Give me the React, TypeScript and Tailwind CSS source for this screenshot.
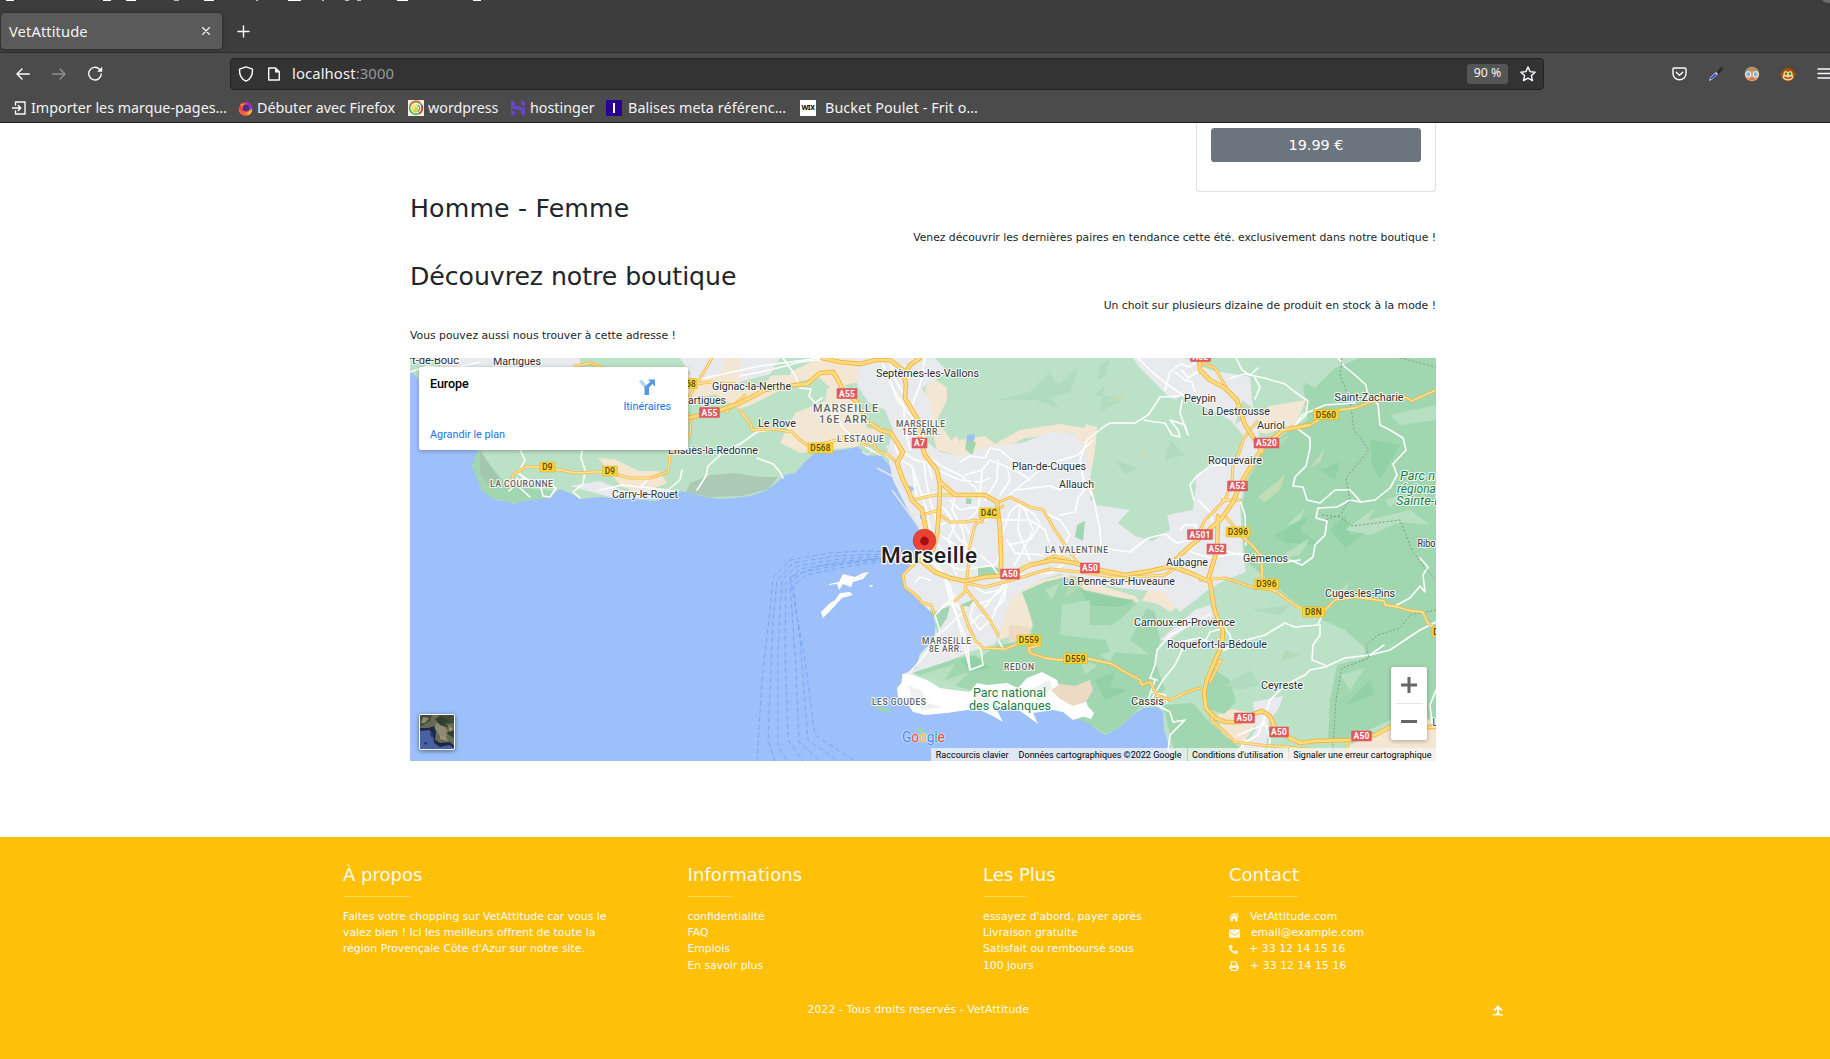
import type { ReactNode } from "react";
import { FaEnvelope, FaPhone } from "react-icons/fa";

type Pt = string;

const WHITE_ROADS: Pt[] = [
  "410,372 428,366 450,369 480,362",
  "520,450 525,460 518,473 528,480 545,482 556,488",
  "523,478 509,491", "517,478 519,487 530,497", "528,482 540,484 543,496 550,497 556,488",
  "582,450 581,458 585,470 583,484 573,492 580,498", "600,490 622,485 640,487 650,478",
  "640,487 668,490 680,480 682,470", "726,450 708,466 706,476 697,490", "726,450 740,444",
  "680,380 705,378 760,366 820,358", "740,376 770,370 800,362 836,358",
  "783,358 795,375 800,388 811,389 809,396 815,403 822,398", "740,444 757,432 770,430",
  "757,458 773,464 780,472 783,478",
  "832,408 843,428 857,440 866,447 880,455", "880,358 890,380 897,400 904,408 905,430 910,450",
  "925,358 920,385 912,405", "890,358 893,375 907,400", "884,366 892,387 907,411 917,424",
  "895,445 900,460 912,466 915,485 917,500", "903,452 915,460 928,463 932,478",
  "925,455 945,468 960,475 975,487 980,496", "937,470 960,480 980,482 990,478",
  "912,466 920,490 927,511 930,530", "924,462 926,480 930,500 935,515 938,530",
  "915,500 922,495 935,493", "960,462 970,456 985,458 990,448 1000,450 1012,460 1020,472",
  "965,475 982,470 990,460 1005,466 1020,473 1030,480", "982,470 980,495 978,510 968,520",
  "998,460 997,480 985,500", "1007,466 1010,480 1000,495", "983,523 997,507 1015,490 1040,470 1055,462 1078,455 1093,440",
  "1015,490 1050,486 1060,490 1075,482 1092,488", "1060,515 1075,512 1078,498 1088,485 1094,500 1100,530 1101,547",
  "1000,540 1010,512 1020,503 1018,530 1030,560", "1020,505 1035,515 1040,525 1030,540 1008,545",
  "1002,520 1030,520 1045,530 1050,545 1060,556", "1015,498 1025,510 1033,530 1023,550 1014,566",
  "1043,512 1060,520 1070,535 1064,545", "1007,540 1015,553 1043,555", "1101,548 1130,552 1148,538 1165,534 1177,543 1200,538",
  "940,505 950,515 953,530 960,540 975,550", "950,500 960,510 975,507 983,515", "945,510 955,525 948,540 956,558",
  "940,525 952,520 965,525 969,533", "940,535 960,548 969,555", "955,495 952,510 963,530 966,550",
  "938,545 950,560 957,575", "928,550 935,565 950,585 954,600 960,610", "933,555 945,578 953,600 963,640 970,670 983,665 981,650 975,640",
  "937,558 960,570 975,568 995,565 1000,555", "943,573 950,600 967,640 970,670", "915,582 920,577 930,580",
  "910,672 925,655 940,632 935,615 955,595", "942,632 955,620 965,610", "938,612 944,605 957,601",
  "975,605 990,600 1007,585 990,623", "970,625 980,615 990,617 997,632", "985,607 1007,580 1004,600 994,610",
  "965,590 975,600 970,617 980,630 990,620", "1000,590 985,593 975,587", "1000,577 990,563 980,555",
  "998,640 1004,650 1008,648", "1003,568 1020,575 1050,573 1065,563 1078,555",
  "1085,490 1080,460 1087,440 1102,428 1110,423 1135,423 1148,415 1155,405 1160,397 1180,396",
  "1144,420 1155,422 1165,423 1172,435 1180,437 1178,430 1170,420 1185,425 1188,435 1180,413 1182,400",
  "1138,358 1150,370 1162,380 1178,392 1185,396", "1165,390 1170,372 1180,364 1190,367 1200,358",
  "1175,372 1185,380 1192,382 1196,395", "1200,370 1188,378 1182,370",
  "1230,378 1245,374 1264,378 1285,384 1295,392 1308,401 1306,415 1294,426 1310,438 1310,448 1306,466 1295,477 1293,486 1303,487 1307,500 1320,503 1335,490 1350,490 1361,502 1375,500 1390,488 1397,475 1393,464 1406,450 1403,438 1390,430 1380,425 1378,404 1368,398 1366,385 1355,375 1345,367 1338,358",
  "1236,358 1242,370 1250,375 1258,368", "1255,378 1260,387 1255,399", "1295,426 1302,415 1325,405 1355,403",
  "1361,502 1350,500 1337,507 1318,508 1316,518 1327,521 1325,535 1315,545 1313,557 1302,565 1290,560",
  "1194,500 1190,485 1195,478 1210,466 1225,465", "1198,500 1210,512 1212,522", "1240,500 1245,515 1246,545",
  "1180,530 1185,525 1196,525 1195,545 1190,550", "1222,550 1240,555 1260,563", "1185,550 1210,558 1240,553 1250,556",
  "1157,680 1150,678 1155,665 1157,650 1170,635 1190,625 1210,614", "1152,698 1163,680 1175,665 1182,650 1179,642 1200,638 1225,650 1245,640",
  "1205,642 1210,632 1225,628 1230,635 1232,645", "1223,650 1240,642 1265,635 1285,623 1295,627 1318,625 1322,615",
  "1320,625 1320,635 1313,645 1312,660 1325,665", "1436,622 1420,630 1390,650 1370,655 1345,658 1325,667 1310,670 1305,675 1285,685 1270,700 1265,715",
  "1384,645 1370,655", "1395,606 1410,598 1420,586 1425,592 1423,575 1428,567 1420,558",
  "1265,715 1258,735 1245,742 1235,755", "1265,717 1263,725 1238,735", "1265,722 1270,740 1268,760", "1245,740 1240,760",
  "1157,705 1170,712 1173,722 1185,720 1170,735 1168,750 1178,758", "1167,703 1165,695 1152,692",
  "1155,680 1148,700 1158,703", "1436,690 1430,705 1432,722", "1300,560 1280,563 1270,560",
];

const MAJOR_ROADS: Pt[] = [
  "688,418 715,412 740,403 765,390 795,385 807,384 820,373 833,372 838,380 843,390 857,402 866,420 880,430 891,433 903,452 897,463 903,480 909,492 912,500 922,510 925,525 930,545",
  "822,358 840,362 860,364 875,360 890,360 903,370 906,385 905,398 912,410 918,420 920,440 925,455 937,470 940,485 939,510 937,535 933,550",
  "920,358 910,365 905,375",
  "940,482 955,495 985,495 997,502 1000,530 1001,555 1001,575",
  "920,560 935,572 950,578 965,581 985,577 1010,575 1030,565 1053,560 1075,563 1090,568 1125,575 1150,571 1172,566 1195,575 1210,582 1212,595 1215,612 1223,630 1222,645 1213,665 1207,680 1204,692 1206,708 1215,718 1225,722 1240,722 1254,714 1262,711 1270,716 1275,728 1290,738 1300,743 1315,741 1350,740 1375,735 1390,727 1436,727",
  "1172,566 1180,555 1200,538 1222,518 1233,502 1240,485 1250,468 1258,455 1265,445 1283,430 1310,425",
  "1208,580 1217,550 1218,516",
  "1262,452 1255,440 1245,425 1240,410 1237,400 1225,388 1210,380 1200,370 1200,358",
];

const MINOR_ROADS: Pt[] = [
  "510,487 513,475 525,467 540,467 555,469 575,473 595,472 603,472 618,475 630,478 650,478 668,472 670,455 690,435 691,420 685,410 690,395 705,370 712,358",
  "740,410 751,425 752,430 775,429 792,432 800,440 810,447 836,440 855,440 866,445 873,443 878,452 888,454 897,463",
  "575,366 590,363 601,367", "690,385 710,382 735,384", "726,412 745,395",
  "1310,425 1325,416 1338,410 1355,408 1370,402 1405,397 1412,401 1425,395 1436,390",
  "1257,422 1250,430 1243,440 1240,450 1233,465 1232,480 1225,500 1205,520 1200,530",
  "1203,363 1215,368 1226,387", "1222,500 1240,500", "912,500 935,495 955,495", "922,515 940,510",
  "940,515 950,522 965,522 975,520 983,522", "998,503 1010,497 1030,507 1043,510 1055,530 1065,545 1080,566",
  "1003,506 983,518 975,525 970,545 968,570 965,592 955,601", "1045,560 1055,556 1070,560",
  "966,583 985,587 1005,582 1050,569 1080,572 1120,578 1165,575 1175,568 1175,558",
  "1200,580 1225,578 1255,588 1275,590 1290,602 1302,609 1325,610 1335,600 1355,597 1384,601 1385,605 1398,607 1412,611 1423,612 1427,622 1436,630",
  "1224,515 1233,525 1240,535 1252,545 1262,557 1262,570 1262,582 1275,592",
  "962,607 968,625 975,640 983,648 1005,649 1020,643 1040,645 1029,648 1030,653 1045,658 1060,660 1090,659 1112,664 1125,672 1140,680 1142,685 1150,682 1157,695 1170,700 1185,693 1200,688",
  "965,588 980,607 990,620 998,635", "922,560 912,566 903,575 905,587 918,597 922,603 931,605 934,613",
  "1214,664 1221,660 1210,682", "1204,700 1213,722 1225,732 1235,742 1260,745 1285,747 1315,750", "1347,742 1347,755",
];

const LIGHT = "#bbe2c6";
const DARK = "#a0d7b0";
const SAND = "#f3e6d2";
const URBAN = "#e8eaed";

const SHARDS: { f: string; p: Pt }[] = [
  { f: "#afdabb", p: "997,400 1030,392 1050,372 1058,385 1078,368 1070,392 1050,398 1060,408 1035,400" },
  { f: "#afdabb", p: "1100,365 1110,360 1104,378 1097,380" }, { f: "#afdabb", p: "1094,395 1105,385 1100,412 1120,402 1130,390 1115,397" },
  { f: "#afdabb", p: "1115,460 1138,468 1125,475" }, { f: "#afdabb", p: "1170,440 1185,455 1165,460" },
  { f: "#c9ddb9", p: "1105,403 1130,390 1122,399" }, { f: "#c9ddb9", p: "1140,450 1150,454 1142,457" },
  { f: "#c9ddb9", p: "1258,497 1285,475 1280,490 1265,502" }, { f: "#c9ddb9", p: "1310,468 1325,448 1320,462" },
  { f: "#b5ddb5", p: "1268,443 1290,435 1275,450" }, { f: "#b5ddb5", p: "1255,410 1235,425 1242,400" },
  { f: "#8fcfa2", p: "1275,535 1310,515 1300,530 1320,545 1285,543" }, { f: "#8fcfa2", p: "1330,530 1345,515 1350,535 1370,530 1345,548" },
  { f: "#8fcfa2", p: "1370,440 1400,445 1380,480 1372,465" }, { f: "#8fcfa2", p: "1320,470 1340,462 1335,480" },
  { f: LIGHT, p: "1345,530 1375,508 1368,520 1410,510 1430,525 1400,522 1370,535" },
  { f: LIGHT, p: "1275,560 1310,538 1300,555" }, { f: LIGHT, p: "1285,527 1305,508 1300,520" },
  { f: LIGHT, p: "1315,375 1328,370 1318,385" }, { f: LIGHT, p: "1385,500 1400,495 1390,508" },
  { f: LIGHT, p: "1390,415 1436,405 1436,420 1400,425" }, { f: "#c3e1b8", p: "1340,590 1350,582 1343,598" },
  { f: "#8fcfa2", p: "1080,590 1110,597 1135,600 1120,607 1090,605" }, { f: LIGHT, p: "1045,590 1060,583 1052,600" },
  { f: LIGHT, p: "1062,605 1090,600 1090,625 1110,625 1105,640 1060,635" }, { f: LIGHT, p: "1103,632 1125,615 1140,600 1150,602 1130,640 1150,655 1110,652" },
  { f: "#b7dcb4", p: "1070,575 1090,580 1065,598" }, { f: LIGHT, p: "1080,660 1098,665 1085,675" }, { f: LIGHT, p: "1100,655 1115,650 1110,662" },
  { f: "#8fcfa2", p: "1095,680 1115,672 1110,687 1130,690 1105,700" }, { f: LIGHT, p: "1340,675 1365,668 1350,690" },
  { f: "#8fcfa2", p: "1345,705 1370,680 1375,695" }, { f: LIGHT, p: "920,675 955,664 945,680 970,672 950,690" },
  { f: "#8fcfa2", p: "960,658 975,655 990,668 970,672" }, { f: "#b1d9b5", p: "1285,650 1300,655 1280,662" },
  { f: "#afdabb", p: "1250,610 1290,605 1280,615" }, { f: "#afdabb", p: "1225,685 1250,670 1260,685 1240,690" },
];

type Label = { x: number; w: number; y: number; t: string; s?: number; c?: string; i?: boolean; k?: boolean };
const LABELS: Label[] = [
  { x: 408, w: 51, y: 363.5, t: "rt-de-Bouc" }, { x: 493, w: 48, y: 364.5, t: "Martigues" },
  { x: 612, w: 66, y: 498, t: "Carry-le-Rouet" }, { x: 668, w: 90, y: 454, t: "Ensuès-la-Redonne" },
  { x: 712, w: 79, y: 390, t: "Gignac-la-Nerthe" }, { x: 688, w: 38, y: 404, t: "artigues" },
  { x: 490, w: 63, y: 486.5, t: "LA COURONNE", k: true, s: 8.7 }, { x: 876, w: 103, y: 376.5, t: "Septèmes-les-Vallons" },
  { x: 813, w: 65, y: 412, t: "MARSEILLE", k: true, s: 10.8 }, { x: 819, w: 52, y: 423, t: "16E ARR.", k: true, s: 10.8 },
  { x: 896, w: 49, y: 426.5, t: "MARSEILLE", k: true, s: 8.5 }, { x: 902, w: 38, y: 434.5, t: "15E ARR.", k: true, s: 8.5 },
  { x: 837, w: 47, y: 442, t: "L'ESTAQUE", k: true, s: 8.7 }, { x: 758, w: 38, y: 427, t: "Le Rove" },
  { x: 1012, w: 74, y: 470, t: "Plan-de-Cuques" }, { x: 1059, w: 35, y: 488, t: "Allauch" },
  { x: 1045, w: 63, y: 553, t: "LA VALENTINE", k: true, s: 8.5 }, { x: 1184, w: 32, y: 402, t: "Peypin" },
  { x: 1202, w: 68, y: 415, t: "La Destrousse" }, { x: 1257, w: 28, y: 429, t: "Auriol" },
  { x: 1334.5, w: 69, y: 400.5, t: "Saint-Zacharie" }, { x: 1208, w: 54, y: 464, t: "Roquevaire" },
  { x: 1417.5, w: 18, y: 547, t: "Ribo" }, { x: 1243, w: 45, y: 561.5, t: "Gémenos" }, { x: 1166, w: 42, y: 566, t: "Aubagne" },
  { x: 1063, w: 112, y: 585, t: "La Penne-sur-Huveaune" }, { x: 1134, w: 101, y: 626, t: "Carnoux-en-Provence" },
  { x: 1167, w: 100, y: 648, t: "Roquefort-la-Bédoule" }, { x: 1325, w: 70, y: 597, t: "Cuges-les-Pins" },
  { x: 1261, w: 42, y: 689, t: "Ceyreste" }, { x: 1131, w: 33, y: 705, t: "Cassis" }, { x: 1432.5, w: 5, y: 726, t: "L" },
  { x: 922, w: 49, y: 643.5, t: "MARSEILLE", k: true, s: 8.5 }, { x: 929, w: 33, y: 651.5, t: "8E ARR.", k: true, s: 8.5 },
  { x: 1004, w: 30, y: 669.5, t: "REDON", k: true, s: 8.5 }, { x: 872, w: 54, y: 704.5, t: "LES GOUDES", k: true, s: 8.5 },
  { x: 973, w: 73, y: 697, t: "Parc national", s: 12.8, c: "#188244" }, { x: 969, w: 82, y: 709.5, t: "des Calanques", s: 12.8, c: "#188244" },
  { x: 1400, w: 35, y: 480, t: "Parc n", s: 12.8, c: "#188244", i: true },
  { x: 1397, w: 39, y: 492.500, t: "régiona", s: 12.8, c: "#188244", i: true },
  { x: 1396, w: 46, y: 505, t: "Sainte-B", s: 12.8, c: "#188244", i: true },
];

const SHIELDS: [string, number, number, number][] = [
  ["A55", 847, 393.5, 20], ["A55", 709.5, 412.5, 20], ["D568", 820.5, 448, 25], ["A7", 919.5, 443, 15], ["D9", 547.5, 467, 15],
  ["D9", 610, 471, 15], ["68", 691, 383.5, 12], ["D4C", 989, 513, 20], ["A52", 1200.5, 356.5, 20], ["D560", 1326, 414.5, 25],
  ["A520", 1266.5, 443, 25], ["A52", 1237.5, 486, 20], ["A501", 1200, 534.5, 25], ["D396", 1238, 532, 24], ["A52", 1216.5, 549, 19],
  ["A50", 1090, 568, 19], ["A50", 1010, 574, 19], ["D396", 1266.5, 584, 24], ["D8N", 1313.5, 612, 22], ["D559", 1029, 640, 24],
  ["D559", 1075.5, 658.5, 24], ["A50", 1244.5, 718, 20], ["A50", 1279, 732, 19], ["A50", 1361.5, 736, 20], ["D", 1436, 632, 8],
];

function Roads({ list, color, width }: { list: Pt[]; color: string; width: number }) {
  return (
    <g fill="none" stroke={color} strokeWidth={width} strokeLinejoin="round" strokeLinecap="round">
      {list.map((p, i) => <polyline key={i} points={p} />)}
    </g>
  );
}

function MapDrawing() {
  return (
    <svg className="block h-full w-full" viewBox="410 358 1026 403" fontFamily="Roboto, sans-serif">
      <rect x="410" y="358" width="1026" height="403" fill="#9dc0fa" />
      <path fill={LIGHT} d="M410 358H1436V761H1175L1170 748 1164 730 1163 712 1157 707 1143 708 1133 715 1120 727 1105 735 1093 727 1088 712 1053 706 985 705 947 708 925 712 907 700 899 690 903 674 916 670 919 655 925 648 934 640 936 625 932 613 915 597 905 587 903 575 915 558 926 548 920 528 908 510 893 480 890 466 880 455 872 456 864 452 858 447 840 450 815 453 805 462 795 473 785 475 775 484 765 491 750 496 735 498 720 499 705 497 690 493 680 491 670 496 655 501 630 499 600 497 580 499 572 494 560 489 550 497 530 500 519 501 514 504 505 500 498 501 492 495 485 493 484 486 478 475 472 467 475 462 478 450 474 440 410 370z" />
      {/* sand belts round the hills */}
      <g fill={SAND}>
        <path d="M715 358h35l15 18 40-2-25 20-40 15-25-15-20 5-20-15z" />
        <path d="M790 372l30-14h45l8 5-12 18-6 18 30 20-5 18-25 10-55 6-20-10 15-30 30-12 2-10-16-12-20 4z" />
        <path d="M598 458l16 1 25 12 20 0 8 12-25 10-20-6-12-14z" />
        <path d="M925 388l8-10 14 10 0 12-10 20 14 20 6-4 10 22-30-8-8-30z" />
        <path d="M960 440l25-4 10 8 25-14 40-6 25 4 10 10v60l-15-10-5-55-50 5-25 12-25 20-15-10z" />
        <path d="M1085 424l12 3-5 70-8-10z" />
        <path d="M1250 420l20-14 36-6-10 24-30 10-16-4z" />
        <path d="M998 640l10-42 18-14 40-10 20 4-22 18-30-10 0 14 8 14-14 18z" />
        <path d="M1075 578l60 18 5 6-30-2-38-14zM1148 590l35 2 2 10-15 10-12-8-16-3z" />
        <path d="M1217 715l15-6 20 4 6 8-16 24-18-8z" />
        <path d="M1350 745l50-22 36-4v42h-90zM1260 752h90v9h-90z" />
      </g>
      <g fill={LIGHT}>
        <path d="M740 365l35 5-10 14-25 8zM785 388l35-10 10 10-35 12-25 20-40 5 25-22zM845 385l25-5 8 25 10 10-5 12-15 2z" />
      </g>
      {/* built-up ground */}
      <g fill={URBAN}>
        <path d="M858 358H935L948 372 930 383 922 388 930 402 933 420 925 440 940 452 960 456 985 447 1000 446 1025 442 1050 432 1075 434 1085 450 1092 475 1090 500 1130 510 1118 523 1135 536 1152 541 1170 530 1167 515 1193 510 1196 485 1195 475 1220 462 1240 455 1243 435 1230 420 1200 405 1170 398 1140 368 1133 358H1185L1210 370 1250 377 1252 400 1260 440 1262 452 1246 480 1240 505 1243 555 1246 572 1225 580 1208 590 1180 612 1163 592 1120 588 1090 582 1060 574 1040 580 1022 590 1010 600 1002 625 995 644 975 650 958 657 918 675 903 674 916 668 920 655 934 640 936 625 932 613 915 597 905 587 903 575 915 558 926 548 920 528 908 510 893 480 887 452 893 430 885 410 868 402 857 385z" />
        <path d="M680 358h45l-5 18-25 5zM570 486l30-5 25 10 30-3 25 3-20 8-50-2zM440 358h140v10H440zM740 358h40l-10 16-30 8z" />
        <path d="M1160 640l35-30 15-5 5 12-28 10-17 13zM1253 702l30-6-4 12-10 14-5 38h-30l22-30z" />
      </g>
      {/* hills north of the city, rising out of the built-up ground */}
      <path fill={LIGHT} d="M1098 432L1115 424H1150L1180 396 1200 405 1232 422 1240 445 1215 460 1196 475 1190 508 1167 515 1169 530 1152 541 1118 523 1130 510 1096 505 1090 480z" />
      {/* denser woodland */}
      <g fill={DARK}>
        <path d="M1318 358L1303 388 1306 402 1308 420 1290 430 1262 452 1247 482 1242 505 1245 560 1262 575 1292 600 1318 618 1345 630 1365 648 1364 658 1337 665 1330 700 1328 740 1352 738 1390 720 1436 718V358z" />
        <path d="M912 673L958 658 972 663 998 645 1030 640 1033 625 1027 605 1022 592 1045 582 1066 577 1085 590 1130 600 1155 612 1160 640 1155 660 1165 690 1140 708 1120 727 1105 734 1093 726 1050 705 970 690z" />
        <path d="M478 451l30 35 45 5-3 7-20 2-16 3-20-4-12-8-10-26z" />
        <path d="M1212 668l18 12 6 22-12 12-15-5-4-20zM1163 705l30-2 17 20 30 25-4 13h-60z" />
        <path d="M934 612l16-6-3 12-10 15zM978 566l22 2v8l-22 0zM960 605l14-6-5 8zM1077 525l8-4-2 20-8-4zM1048 540l3 4-2 4z" />
        <path d="M966 498l6 1-1 5-5 0zM967 435l9 8-4 12-7-6z" />
      </g>
      <path fill={LIGHT} d="M1290 360l30-2h40l-25 10-20 20-14-8z" />
      <g fill="#a5bfae" opacity=".7">
        <path d="M690 483l20-8 25-2 25 4 18 0-10 12-25 7-35 1-22-5z" />
        <path d="M480 450l8 12 12 18-10 6-10-12z" />
      </g>
      {SHARDS.map((s, i) => <polygon key={i} points={s.p} fill={s.f} opacity={0.8} />)}
      {/* bare limestone of the coves and the islands */}
      <g fill="#ffffff">
        <path d="M902 674L910 674 927 680 940 688 953 690 970 692 977 683 987 685 1007 683 1018 688 1027 678 1042 672 1057 680 1060 688 1077 703 1087 702 1088 715 1073 720 1063 712 1053 710 1033 713 1038 724 1023 713 1013 707 992 706 998 712 1003 722 993 716 982 711 967 710 947 713 925 715 913 712 907 703 898 698 897 688 902 682z" />
        <path d="M829 584l10-2 4-8 12 3 8-4 6-1-6 7-10 3-2 5-8-3-4 6-2-6-8 1zM821 612l8-8 6-4 5-7 10-1 3 3-11 3-11 12-8 8z" />
        <path d="M870 585l3 0-1 2-3-1zM1080 696l6 8 8 9-3 6-12-4z" />
      </g>
      <path fill="#eedac4" d="M1051 690L1060 684 1075 686 1090 680 1093 690 1086 702 1073 706 1060 699zM1009 625l20 2 0 8-20 8z" />
      <g fill="#eef0f2"><path d="M908 685l14 6 6 12 14 4-20 3-10-12zM975 694l10 0 6 8-12 4zM1030 690l20-10 2 8-14 14zM858 576l6-1-4 4z" /></g>
      <g fill="#9bd5ae"><path d="M876 706l12 2 3 4-12-1zM915 728l8 1 4 6-8-3zM946 747l5 3-5 1zM930 610l5 3-1 8z" /></g>
      {/* harbour moles */}
      <g fill="none" stroke="#e3e6ea" strokeWidth="1.6">
        <path d="M877 468l17 9M892 490l24 33 6 10M862 452l6 3 4-4M896 480l12 14M905 500l6-5M909 508l7-4M912 516l7-3M917 526l7-4" />
        <path d="M880 452l10 6M887 446l6 8" strokeWidth="2.5" />
      </g>
      <g fill="#9dc0fa"><path d="M967 435l7-1 1 5-4 3-4-2zM971 480l5 1-4 2z" /><path d="M908 485l6 3-2 4zM920 514l3 4-3 1z" /></g>
      <g fill="none" stroke="#78a6f5" strokeWidth="1" strokeDasharray="5 3">
        <path d="M905 552L860 551 830 553 790 560 773 577 770 610 762 680 757 761" />
        <path d="M903 553L835 556 793 563 777 580 773 620 768 740 775 761" />
        <path d="M903 555L840 559 797 566 782 580 778 650 778 745 787 761" />
        <path d="M902 557L845 561 800 569 786 582 785 650 788 740 803 761" />
        <path d="M900 558L850 563 803 572 790 583 796 670 799 742 820 761" />
        <path d="M900 560L855 565 806 575 793 586 800 640 808 740 838 761" />
        <path d="M899 556L820 566 790 577 805 660 815 735 855 761" />
      </g>
      <Roads list={WHITE_ROADS} color="#ffffff" width={1.6} />
      <g fill="none" stroke="#7f9a88" strokeWidth="1" strokeDasharray="2 2">
        <path d="M1342 358L1340 375 1350 400 1354 430 1369 450 1346 478 1350 500 1340 515 1325 520M1322 515L1340 517 1352 526 1400 520 1412 550 1425 568 1436 580M1400 358L1436 367M1436 610L1410 615 1400 628 1378 635 1366 645 1369 658 1342 668 1336 700 1332 761" />
      </g>
      <Roads list={MINOR_ROADS} color="#f5b947" width={3} />
      <Roads list={MINOR_ROADS} color="#ffe7a0" width={1.3} />
      <Roads list={MAJOR_ROADS} color="#f6b436" width={4.6} />
      <Roads list={MAJOR_ROADS} color="#ffe596" width={2.6} />
      <Roads list={MAJOR_ROADS} color="#f9cb66" width={0.7} />

      {SHIELDS.map(([t, x, y, w], i) => {
        const red = t[0] === "A";
        return (
          <g key={i}>
            <rect x={x - w / 2} y={y - 5} width={w} height={10} rx="0.5" fill={red ? "#dd5b61" : "#fad53e"} stroke={red ? "#dd5b61" : "#d9b52a"} strokeWidth="0.6" />
            <text x={x} y={y + 3} textAnchor="middle" fontSize="8.4" fontWeight={red ? 700 : 500} fill={red ? "#fff" : "#5a4300"} letterSpacing=".2">{t}</text>
          </g>
        );
      })}
      {LABELS.map((l, i) => (
        <text
          key={i} x={l.x} y={l.y} textLength={l.w} lengthAdjust={l.k ? "spacing" : "spacingAndGlyphs"} fontSize={l.s ?? 11.3}
          fill={l.c ?? (l.k ? "#5f6368" : "#2b2d30")} fontWeight={l.k ? 500 : 400} fontStyle={l.i ? "italic" : "normal"}
          stroke="#fff" strokeWidth="2.2" strokeOpacity=".85" strokeLinejoin="round" paintOrder="stroke"
        >
          {l.t}
        </text>
      ))}
      <circle cx="924.5" cy="540.5" r="11.3" fill="#ea4335" stroke="#c5221f" strokeWidth=".6" />
      <circle cx="924.5" cy="541" r="4.4" fill="#a50e0e" />
      <path d="M920 551h9l-4 9z" fill="#ea4335" />
      <text x="881" y="563" textLength="96" fontSize="22.5" fontWeight="500" fill="#202124" stroke="#fff" strokeWidth="2.6" strokeLinejoin="round" paintOrder="stroke">Marseille</text>
    </svg>
  );
}

function Satellite() {
  return (
    <svg viewBox="0 0 34 34" className="h-full w-full">
      <rect width="34" height="34" fill="#666b52" />
      <path d="M0 0h12l-2 6-10 6zM18 0h16v8l-12 2z" fill="#3f4d38" />
      <path d="M3 2l6 1-4 5-4 0zM16 8l8 2 4 8-3 6-6-4-4-7z" fill="#8f8873" />
      <path d="M15 4l6-3 8 5-5 2 6 5-10-3zM26 18l8-3v8z" fill="#2f3f2e" />
      <path d="M28 10l5 4-3 3zM20 20l6 2 2 4-8-2z" fill="#9c9378" />
      <path d="M0 14L10 12 14 17 15 26 20 28 30 27 34 31V34H0z" fill="#4a60a0" />
      <path d="M0 13h9l5-2 2 6-1 8 5 3 10-1 4 4v2l-5-3-9 2-6-4-1-9-4-4-9 1z" fill="#1b2745" />
      <path d="M5 27l2 0 0 3-3-1zM10 18l3 0 1 4-3 0z" fill="#25376a" />
    </svg>
  );
}

function Bookmark({ icon, children, className }: { icon: ReactNode; children: ReactNode; className: string }) {
  return (
    <div className={"flex shrink-0 items-center whitespace-nowrap " + className}>
      {icon}
      {children}
    </div>
  );
}

function Browser() {
  const s = { fill: "none", stroke: "#fbfbfe", strokeWidth: 1.4, strokeLinecap: "round", strokeLinejoin: "round" } as const;
  return (
    <header className="flex h-[123px] flex-col border-b border-[#1c1b22] bg-[#4b4b4b] font-['Noto_Sans',sans-serif] text-[14.3px] text-[#f3f3f5]">
      <div className="flex h-[53px] flex-col border-b border-[#2b2b2b] bg-[#3d3d3d]">
        <svg className="block h-[13px] w-full shrink-0" viewBox="0 0 1830 13">
          <path d="M6 0h8M103 0h8M126 0h10M204 0h10M288 0h13M397 0h11M473 0h8" stroke="#fff" strokeWidth="2" />
          <path d="M174 0h5M256 0h2M322 0h2M345 0h4M357 0h4" stroke="#bbb" strokeWidth="2" />
          <circle cx="1828" cy="-4" r="7" fill="#6a6a6a" />
        </svg>
        <div className="flex items-center">
          <div className="ml-px flex h-9 w-[221px] items-center justify-between rounded-[4px] bg-[#5a5a5a] pl-2 pr-3 shadow-[0_0_3px_rgba(0,0,0,.5)]">
            <span className="text-[14.7px] tracking-[0.1px]">VetAttitude</span>
            <svg width="8" height="8" viewBox="0 0 8 8"><path d="M.5.5l7 7M7.5.5l-7 7" {...s} strokeWidth={1.1} /></svg>
          </div>
          <svg className="ml-[15px]" width="13" height="13" viewBox="0 0 13 13"><path d="M6.5 1v11M1 6.500h11" {...s} /></svg>
        </div>
      </div>
      <div className="flex h-[41px] shrink-0 items-center">
        <svg className="ml-4" width="14" height="12" viewBox="0 0 14 12"><path d="M13.300 6H1M6 1L1 6l5 5" {...s} /></svg>
        <svg className="ml-[22px] opacity-40" width="14" height="12" viewBox="0 0 14 12"><path d="M.7 6H13M8 1l5 5-5 5" {...s} /></svg>
        <svg className="ml-[22px]" width="15" height="15" viewBox="0 0 15 15">
          <path d="M13.300 8A6.300 6.300 0 1 1 11.500 3.200" {...s} /><path d="M14.200 .8v5H9.200z" fill="#fbfbfe" />
        </svg>
        <div className="ml-[127px] flex h-8 w-[1315px] items-center rounded-[4px] border border-[#222] bg-[#333]">
          <svg className="ml-[7px]" width="16" height="16" viewBox="0 0 16 16"><path d="M8 .8L14.500 3.200C14.700 8.500 12.500 13.200 8 15.200 3.500 13.200 1.300 8.500 1.500 3.200z" {...s} /></svg>
          <svg className="ml-[13px]" width="14" height="14" viewBox="0 0 14 14"><path d="M1.700 1h6.800l3.800 3.800V13H1.700z" {...s} /><path d="M8 1v4.500h4.500z" fill="#fbfbfe" /></svg>
          <span className="ml-[11px] text-[14.8px] tracking-[0.13px]">localhost<span className="text-[#9a9a9c]">:3000</span></span>
          <span className="ml-auto flex h-5 w-[41px] items-center justify-center rounded-[3px] bg-[#555] text-[12.3px]">90 %</span>
          <svg className="ml-3 mr-[7px]" width="16" height="16" viewBox="0 0 16 16"><path d="M8 1l2.100 4.600 5 .6-3.700 3.400 1 5L8 12.100 3.600 14.600l1-5L.9 6.200l5-.6z" {...s} /></svg>
        </div>
        <svg className="ml-[128px]" width="15" height="14" viewBox="0 0 15 14"><path d="M2.200 1h10.600q1.200 0 1.200 1.200V6.500a6.500 6.300 0 0 1-13 0V2.200Q1 1 2.200 1zM4.300 5.200l3.200 3.100 3.200-3.100" {...s} /></svg>
        <svg className="ml-[21px]" width="16" height="16" viewBox="0 0 16 16">
          <path d="M8 7l4-5 3-1.500-1 4-4 4z" fill="#2d2a2a" /><path d="M1 15l1-3.500L8 6l2 2-6 5.500z" fill="#dfe6f5" /><path d="M2.500 13l5.500-5" stroke="#2c50d8" strokeWidth="1.800" />
        </svg>
        <svg className="ml-5" width="16" height="16" viewBox="0 0 16 16">
          <circle cx="8" cy="8" r="7.300" fill="#d99a6c" /><path d="M1 7a7.200 7.200 0 0 1 14 0l-3-2H4z" fill="#a3946a" />
          <circle cx="4.300" cy="8.300" r="2.700" fill="#86b9d0" stroke="#f4f6f6" strokeWidth="1" /><circle cx="11.700" cy="8.300" r="2.700" fill="#86b9d0" stroke="#f4f6f6" strokeWidth="1" />
          <path d="M6 13h4" stroke="#c0563b" />
        </svg>
        <svg className="ml-5" width="16" height="16" viewBox="0 0 16 16">
          <path d="M7 3l3-3 0 2 3-1-1 3z" fill="#7b3b00" /><circle cx="2.300" cy="8.500" r="2.200" fill="#9b4d05" /><circle cx="13.700" cy="8.500" r="2.200" fill="#9b4d05" />
          <circle cx="8" cy="8.800" r="6.700" fill="#a85208" /><path d="M3.500 8q0-3 2.500-3l2 1 2-1q2.500 0 2.500 3l1 3q-1 3.500-5.500 3.500T2.500 11z" fill="#f5d18c" />
          <circle cx="6" cy="7.800" r="1.200" fill="#3b7a3a" /><circle cx="10" cy="7.800" r="1.200" fill="#3b7a3a" /><path d="M4.500 11q3.500 2.500 7 0" stroke="#8d1f10" strokeWidth="1.200" fill="none" />
        </svg>
        <svg className="ml-[21px] shrink-0" width="13" height="11" viewBox="0 0 13 11"><path d="M1 1h12M1 5.500h12M1 10h12" {...s} /></svg>
      </div>
      <div className="flex h-7 items-center">
        <Bookmark className="ml-3 w-[226px] gap-[5px]" icon={
          <svg width="14" height="14" viewBox="0 0 14 14"><path d="M3.500 4V1h9.500v12H3.500v-3M0 7h8.500M6.300 4.500L8.800 7 6.300 9.500" {...s} /></svg>
        }>Importer les marque-pages…</Bookmark>
        <Bookmark className="w-[170px] gap-1 tracking-[-0.03px]" icon={
          <svg width="15" height="15" viewBox="0 0 15 15">
            <circle cx="7.500" cy="8" r="6.800" fill="#ff3a50" />
            <path d="M.7 8a6.800 6.800 0 0 0 13.600 0l-3-1-4 4z" fill="#ff7a2a" opacity=".55" />
            <path d="M2 3.500L4.500 2 7 3.500l-2 3 2 4 4 .5 2-3 1.300 1A6.800 6.800 0 0 1 9 14.500z" fill="#ffb52e" opacity=".55" />
            <path d="M7 .8q6.500 0 7.300 6.200L13 11q-.5-3-1.500-5z" fill="#9d2bd6" /><circle cx="8" cy="7" r="3.500" fill="#4c3180" /><path d="M11 10.500l3.200-2.500a7 7 0 0 1-4 6z" fill="#ffc83a" />
          </svg>
        }>Débuter avec Firefox</Bookmark>
        <Bookmark className="w-[102px] gap-1" icon={
          <svg width="16" height="16" viewBox="0 0 16 16"><rect width="16" height="16" fill="#f6eee0" /><circle cx="8" cy="8" r="6.300" fill="none" stroke="#3bae49" strokeWidth="1.500" /><path d="M2 6a6.300 6.300 0 0 1 10-3.500" stroke="#e2732e" strokeWidth="1.600" fill="none" /><path d="M13.500 5a6.300 6.300 0 0 1-2 8.500" stroke="#d9372b" strokeWidth="1.600" fill="none" /><circle cx="8" cy="8.500" r="4" fill="#d8d63a" /><path d="M5 10l2-5 4 3-1 4" stroke="#f7f7f7" fill="none" /><path d="M10 5l2 3-2 4" stroke="#3a9a8e" fill="none" /></svg>
        }>wordpress</Bookmark>
        <Bookmark className="ml-px w-[95px] gap-[5px]" icon={
          <svg width="14" height="16" viewBox="0 0 14 16"><path d="M0 0l4 2v4h5l4 3H0zM14 16l-4-2v-4H5l-4-2.500h13zM10 0l4 2v4.500l-4-2zM0 10l4 2v4l-4-2z" fill="#6747c7" /></svg>
        }>hostinger</Bookmark>
        <Bookmark className="w-[194px] gap-1.5 tracking-[0.1px]" icon={<span className="flex size-4 items-center justify-center bg-[#2a0090]"><span className="h-2.5 w-0.5 bg-white" /></span>}>Balises meta référenc…</Bookmark>
        <Bookmark className="gap-[9px] tracking-[0.1px]" icon={<span className="flex size-4 items-center justify-center bg-white text-[7px] font-bold tracking-[-0.05em] text-black">WIX</span>}>Bucket Poulet - Frit o…</Bookmark>
      </div>
    </header>
  );
}

function MapPanel() {
  return (
    <div className="relative h-[403px] overflow-hidden font-[Roboto,sans-serif]">
      <MapDrawing />
      <div className="absolute left-[9px] top-[9px] flex h-[83px] w-[269px] justify-between rounded-[2px] bg-white px-[11px] shadow-[0_1px_4px_rgba(0,0,0,.3)]">
        <div className="flex flex-col">
          <span className="mt-[9px] text-[12.6px] font-medium leading-4 tracking-[-0.01em] text-black">Europe</span>
          <span className="mt-[35px] text-[10.8px] leading-4 text-[#1a73e8]">Agrandir le plan</span>
        </div>
        <div className="mr-1.5 flex flex-col items-center">
          <svg className="mt-3" width="16" height="16" viewBox="0 0 16 16"><path d="M0 2.500L2.500 .5 8 6.500 6 9.500z" fill="#b5d3f5" /><path d="M9 .5h7v7l-2.500-2.500L10 8.500V16H5.500V8L11.300 2.800z" fill="#5596e6" /></svg>
          <span className="mt-1 text-[10.8px] leading-4 text-[#1a73e8]">Itinéraires</span>
        </div>
      </div>
      <div className="absolute left-[9px] top-[356px] size-9 overflow-hidden rounded-[2px] border border-white shadow-[0_1px_4px_rgba(0,0,0,.5)]"><Satellite /></div>
      <div className="absolute left-[492px] top-[371px] text-[13.800px] leading-4 tracking-[-0.01em] [text-shadow:0_0_1px_#fff,0_0_2px_#fff]">
        <span className="text-[#4285f4]">G</span><span className="text-[#ea4335]">o</span><span className="text-[#f4b400]">o</span><span className="text-[#4285f4]">g</span><span className="text-[#34a853]">l</span><span className="text-[#ea4335]">e</span>
      </div>
      <div className="absolute left-[981px] top-[309px] flex h-[73px] w-9 flex-col items-center rounded-[2px] bg-white shadow-[0_1px_4px_rgba(0,0,0,.3)]">
        <svg className="mt-[10px]" width="16" height="16" viewBox="0 0 16 16"><path d="M8 0v16M0 8h16" stroke="#666" strokeWidth="3" /></svg>
        <span className="mt-[10px] h-px w-[27px] bg-[#e6e6e6]" />
        <span className="mt-4 h-[3px] w-4 bg-[#666]" />
      </div>
      <div className="absolute bottom-0 right-0 flex h-[13px] items-center text-[9px] leading-[15px] text-black">
        <span className="h-[13px] bg-[#f5f5f5]/75 px-[5px]">Raccourcis clavier</span>
        <span className="h-[13px] bg-[#f5f5f5]/75 px-[5px]">Données cartographiques ©2022 Google</span>
        <span className="ml-px h-[13px] bg-[#f5f5f5]/75 px-[4.500px]">Conditions d'utilisation</span>
        <span className="ml-px h-[13px] bg-[#f5f5f5]/75 px-[4.500px]">Signaler une erreur cartographique</span>
      </div>
    </div>
  );
}

function Column({ title, className, rule, children }: { title: string; className: string; rule: string; children: ReactNode }) {
  return (
    <div className={"shrink-0 " + className}>
      <h6 className="h-[22px] text-[18px] leading-6">{title}</h6>
      <div className={"mb-3 mt-[11px] h-px bg-white/35 " + rule} />
      <div className="leading-4">{children}</div>
    </div>
  );
}

function Footer() {
  return (
    <footer className="h-[222px] bg-[#ffc107] text-[10.8px] text-[#f8f9fa]">
      <div className="flex h-[154px] pl-[343px] pt-[26px]">
        <Column title="À propos" className="w-[344.500px]" rule="w-[68px]">
          <span className="tracking-[0.01px]">Faites votre chopping sur VetAttitude car vous le<br />valez bien ! Ici les meilleurs offrent de toute la<br />région Provençale Côte d'Azur sur notre site.</span>
        </Column>
        <Column title="Informations" className="w-[295.500px] [&_h6]:tracking-[0.1px]" rule="w-11">
          confidentialité<br />FAQ<br />Emplois<br /><span className="mt-px block">En savoir plus</span>
        </Column>
        <Column title="Les Plus" className="w-[246px]" rule="w-11">
          essayez d'abord, payer après<br />Livraison gratuite<br />Satisfait ou remboursé sous<br /><span className="mt-px block">100 jours</span>
        </Column>
        <Column title="Contact" className="w-[200px]" rule="w-[69px]">
          <div className="flex items-center gap-[11px]">
            <svg width="10" height="10" viewBox="0 0 10 10" fill="currentColor"><path d="M5 .8L10 5l-.6.7L5 2.200.6 5.700 0 5zM7.600 1.200H9v2.200L7.600 2.300zM5 2.900L8.600 5.900V9.200H6V6.700H4v2.500H1.400V5.900z" /></svg>
            VetAttitude.com
          </div>
          <div className="flex items-center gap-[11px]"><FaEnvelope size={11} /><span className="tracking-[-0.03px]">email@example.com</span></div>
          <div className="flex items-center gap-[11px] tracking-[0.1px]"><FaPhone size={9} className="-scale-x-100" />+ 33 12 14 15 16</div>
          <div className="mt-px flex items-center gap-[11px] tracking-[0.1px]">
            <svg width="10" height="10" viewBox="0 0 10 10" fill="none" stroke="currentColor" strokeWidth="1.100"><path d="M2.300 5V.7h4.200l1.300 1.400V5M2.300 7.500v1.900h5.500V7.500" /><path d="M.2 8V5.600Q.2 4.500 1.400 4.500h7.200q1.200 0 1.200 1.100V8H8V6.700H2V8z" fill="currentColor" stroke="none" /></svg>
            + 33 12 14 15 16
          </div>
        </Column>
      </div>
      <div className="flex h-9 items-center justify-between pl-[807.500px] pr-[327px] pt-0.5">
        <span className="tracking-[0.11px]">2022 - Tous droits reservés - VetAttitude</span>
        <svg className="mt-px" width="10" height="11" viewBox="0 0 10 11" fill="#fff"><path d="M5 .2L9.600 4.800 8.400 6 6 4v4.500H4V4L1.600 6 .4 4.800zM0 9.300h3.200V8h3.600v1.300H10v1.200H0z" /></svg>
      </div>
    </footer>
  );
}

export default function App() {
  return (
    <div className="flex h-[1059px] w-[1830px] flex-col overflow-hidden bg-white font-['DejaVu_Sans',sans-serif] text-[#212529]">
      <Browser />
      <main className="ml-[410px] flex h-[714px] w-[1026px] flex-col text-[10.8px]">
        <div className="ml-auto flex h-[69px] w-60 justify-center rounded-b-[4px] border border-t-0 border-[#dfdfdf] pt-[5px]">
          <div className="flex h-[34px] w-[210px] items-center justify-center rounded-[3.6px] bg-[#6c757d] pt-0.5 text-[14.4px] text-white">19.99 €</div>
        </div>
        <h2 className="mt-0.5 text-[25.2px] leading-[30px] tracking-[0.17px]">Homme - Femme</h2>
        <p className="mt-1.5 text-right leading-4 tracking-[-0.02px]">Venez découvrir les dernières paires en tendance cette été. exclusivement dans notre boutique !</p>
        <h2 className="mt-4 text-[25.2px] leading-[30px] tracking-[-0.06px]">Découvrez notre boutique</h2>
        <p className="mt-1.5 text-right leading-4">Un choit sur plusieurs dizaine de produit en stock à la mode !</p>
        <p className="mb-[14px] mt-[14px] leading-4">Vous pouvez aussi nous trouver à cette adresse !</p>
        <MapPanel />
      </main>
      <Footer />
    </div>
  );
}
